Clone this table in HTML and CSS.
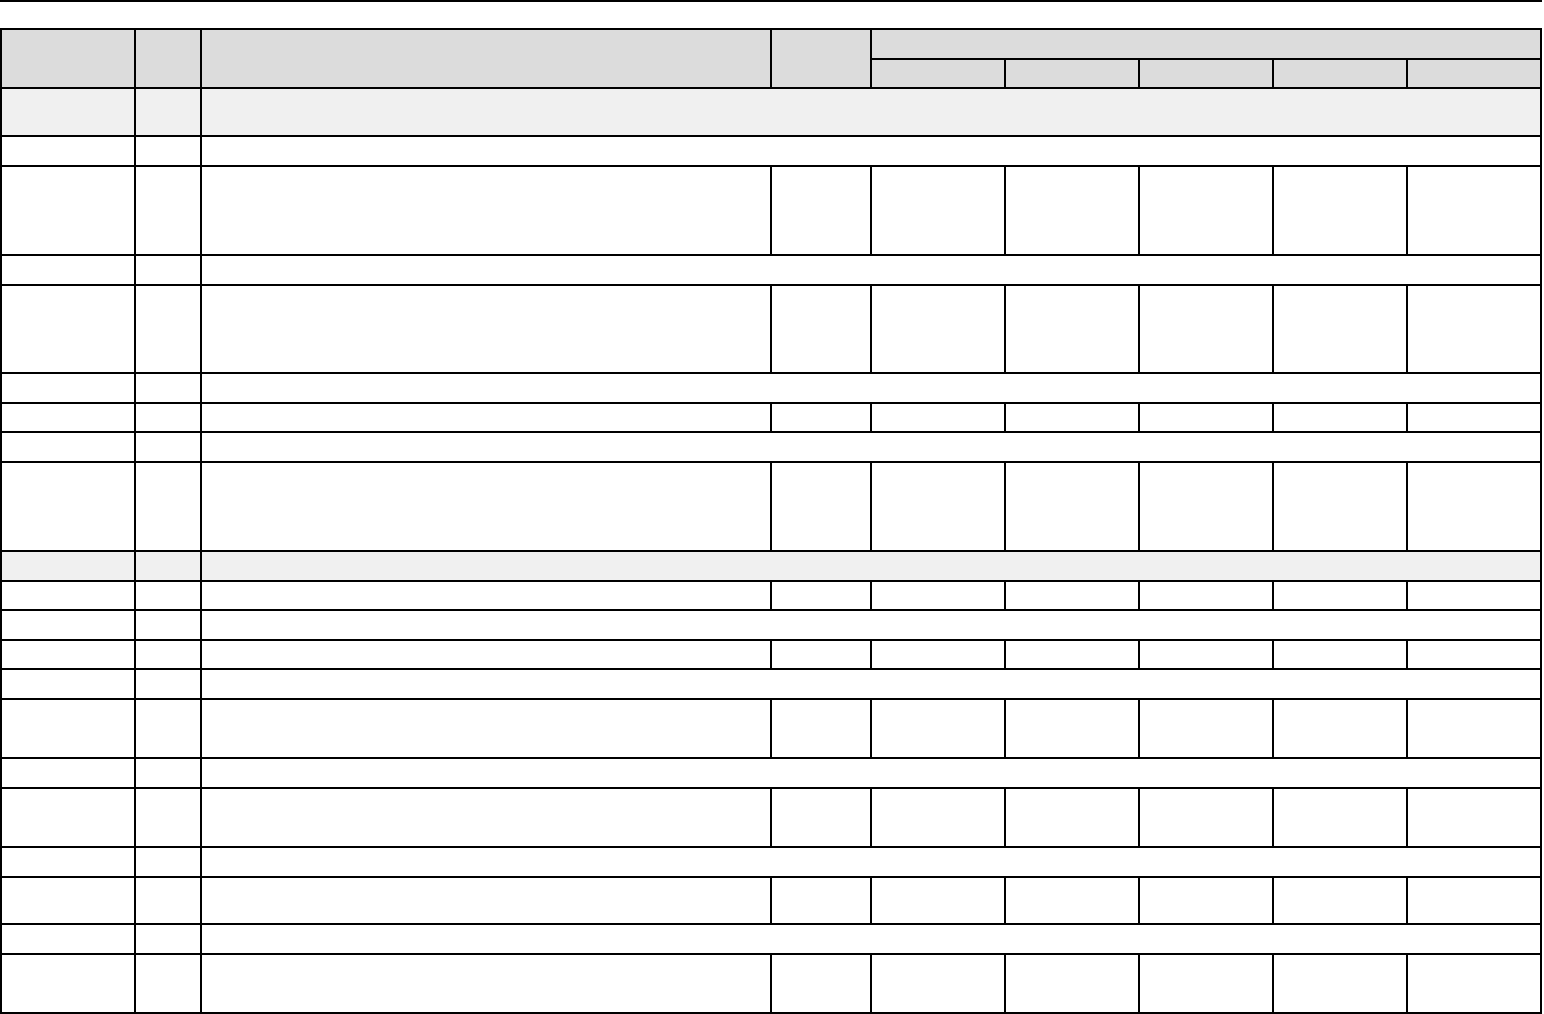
FILE: index.html
```html
<!DOCTYPE html>
<html>
<head>
<meta charset="utf-8">
<link rel="stylesheet" href="styles.css">
</head>
<body>
<div class="topline"></div>
<table class="grid">
<colgroup>
<col class="c0"><col class="c1"><col class="c2"><col class="c3"><col class="c4"><col class="c4"><col class="c4"><col class="c4"><col class="c4">
</colgroup>
<thead>
<tr class="h30"><th rowspan="2"></th><th rowspan="2"></th><th rowspan="2"></th><th rowspan="2"></th><th colspan="5"></th></tr>
<tr class="h29"><th></th><th></th><th></th><th></th><th></th></tr>
</thead>
<tbody>
<tr class="h48 shade"><td></td><td></td><td colspan="7"></td></tr>
<tr class="h30"><td></td><td></td><td colspan="7"></td></tr>
<tr class="h89"><td></td><td></td><td></td><td></td><td></td><td></td><td></td><td></td><td></td></tr>
<tr class="h30"><td></td><td></td><td colspan="7"></td></tr>
<tr class="h88"><td></td><td></td><td></td><td></td><td></td><td></td><td></td><td></td><td></td></tr>
<tr class="h30"><td></td><td></td><td colspan="7"></td></tr>
<tr class="h29"><td></td><td></td><td></td><td></td><td></td><td></td><td></td><td></td><td></td></tr>
<tr class="h30"><td></td><td></td><td colspan="7"></td></tr>
<tr class="h89"><td></td><td></td><td></td><td></td><td></td><td></td><td></td><td></td><td></td></tr>
<tr class="h30 shade"><td></td><td></td><td colspan="7"></td></tr>
<tr class="h29"><td></td><td></td><td></td><td></td><td></td><td></td><td></td><td></td><td></td></tr>
<tr class="h30"><td></td><td></td><td colspan="7"></td></tr>
<tr class="h29"><td></td><td></td><td></td><td></td><td></td><td></td><td></td><td></td><td></td></tr>
<tr class="h30"><td></td><td></td><td colspan="7"></td></tr>
<tr class="h59"><td></td><td></td><td></td><td></td><td></td><td></td><td></td><td></td><td></td></tr>
<tr class="h30"><td></td><td></td><td colspan="7"></td></tr>
<tr class="h59"><td></td><td></td><td></td><td></td><td></td><td></td><td></td><td></td><td></td></tr>
<tr class="h30"><td></td><td></td><td colspan="7"></td></tr>
<tr class="h47"><td></td><td></td><td></td><td></td><td></td><td></td><td></td><td></td><td></td></tr>
<tr class="h30"><td></td><td></td><td colspan="7"></td></tr>
<tr class="h59"><td></td><td></td><td></td><td></td><td></td><td></td><td></td><td></td><td></td></tr>
</tbody>
</table>
</body>
</html>
```

FILE: styles.css
```css
html, body {
  margin: 0;
  padding: 0;
  background: #fff;
  font-family: "Liberation Sans", Arial, sans-serif;
}
.topline {
  width: 1542px;
  height: 0;
  border-top: 2px solid #000;
  margin-bottom: 26px;
}
.grid {
  border-collapse: collapse;
  table-layout: fixed;
  width: 1542px;
}
.grid th, .grid td {
  border: 2px solid #000;
  padding: 0;
}
.grid th {
  background: #dcdcdc;
}
.grid .shade td {
  background: #f0f0f0;
}
.c0 { width: 134px; }
.c1 { width: 66px; }
.c2 { width: 570px; }
.c3 { width: 100px; }
.c4 { width: 134px; }
.h29 { height: 29px; }
.h30 { height: 30px; }
.h47 { height: 47px; }
.h48 { height: 48px; }
.h59 { height: 59px; }
.h88 { height: 88px; }
.h89 { height: 89px; }
```
